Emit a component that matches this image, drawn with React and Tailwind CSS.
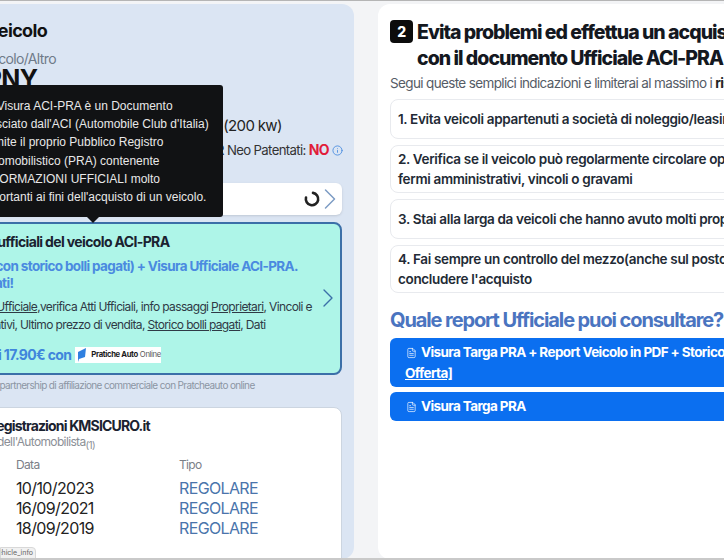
import { ChevronRight, Info, FileText } from 'lucide-react'

const STEPS = [
  ['1. Evita veicoli appartenuti a società di noleggio/leasing'],
  ['2. Verifica se il veicolo può regolarmente circolare oppure se ha', 'fermi amministrativi, vincoli o gravami'],
  ['3. Stai alla larga da veicoli che hanno avuto molti proprietari'],
  ["4. Fai sempre un controllo del mezzo(anche sul posto) prima di", "concludere l'acquisto"],
]

const REGS = ['10/10/2023', '16/09/2021', '18/09/2019']

function LeftPanel() {
  return (
    <div className="relative w-[414px] shrink-0 -ml-[60px] mt-[3px] rounded-xl bg-[#dbe5f3] pl-[17px] pr-[12px] pt-[17px]">
      <h2 className="text-[18px] leading-[20px] font-bold text-[#111] -ml-[5px]">Dati veicolo</h2>
      <div className="mt-[9px] text-[14px] leading-[18px] text-[#6f7a88] -ml-[4px]">Autoveicolo/Altro</div>
      <div className="text-[25px] leading-[30px] font-bold text-[#111] whitespace-nowrap -mt-[4px] -ml-[46px]">AB123PNY</div>

      <div className="mt-[22px] ml-[31px] text-[15px] leading-[20px] text-[#222] whitespace-nowrap">
        BMW Serie 3 Touring Business Plus (200 kw)
      </div>
      <div className="mt-[5px] -mr-[1px] flex items-center justify-end text-[13.2px] leading-[18px] text-[#333] whitespace-nowrap">
        <span>PER Neo Patentati:&nbsp;</span>
        <span className="text-[14px] font-bold text-[#e11d3a]">NO</span>
        <Info className="ml-[3px] w-[11px] h-[11px] text-[#4f8fe0]" />
      </div>

      <div className="mt-[24px] h-[32px] flex items-center justify-end rounded-md bg-white shadow-sm">
        <svg width="18" height="18" viewBox="0 0 18 18" fill="none">
          <path d="M10 2.9a6.2 6.2 0 1 1-7 4.6" stroke="#222" strokeWidth="2.6" strokeLinecap="round" />
        </svg>
        <ChevronRight className="w-[36px] h-[36px] -mr-[6px] -ml-[9px] text-[#7d9cc4]" strokeWidth={1} />
      </div>

      <div className="mt-[7px] h-[153px] relative rounded-lg border-2 border-[#3b6fa8] bg-[#aef5e8] pl-[14px] pr-[28px] pt-[9px]">
        <div className="text-[14px] leading-[18px] font-bold text-[#1a2230] whitespace-nowrap -ml-[3px]">Dati ufficiali del veicolo ACI-PRA</div>
        <div className="mt-[7px] -ml-[72px] text-[13.5px] leading-[17px] font-bold text-[#4a8ae0] whitespace-nowrap">
          <div>Report Veicolo (con storico bolli pagati) + Visura Ufficiale ACI-PRA.</div>
          <div className="ml-[13px]">Ottieni tutti i dati!</div>
        </div>
        <div className="mt-[6px] -ml-[36px] text-[12px] leading-[18px] text-[#2f3a46] whitespace-nowrap">
          <div>Visura <span className="underline">PRA Ufficiale</span>,verifica Atti Ufficiali, info passaggi <span className="underline">Proprietari</span>, Vincoli e</div>
          <div className="-ml-[25px]">Fermi Amministrativi, Ultimo prezzo di vendita, <span className="underline">Storico bolli pagati</span>, Dati</div>
        </div>
        <div className="mt-[12px] -ml-[68px] flex items-center text-[14px] leading-[18px] font-bold text-[#3f86dc] whitespace-nowrap">
          <span>A partire da soli 17.90€ con</span>
          <div className="ml-[4px] h-[16px] flex items-center bg-white tracking-tight">
            <svg width="14" height="16" viewBox="0 0 14 16">
              <path d="M3 5 L11 1 L10 10 L4 12 L3 15 Z" fill="#2f80e0" />
            </svg>
            <span className="ml-[2px] text-[7.7px] leading-none font-bold text-[#1a1a1a]">Pratiche Auto</span>
            <span className="ml-[2px] text-[7.7px] leading-none font-normal text-[#555]">Online</span>
          </div>
        </div>
        <ChevronRight className="absolute right-[-4px] top-[58px] w-[32px] h-[32px] text-[#3b6fa8]" strokeWidth={1} />
      </div>

      <div className="mt-[4px] -ml-[2px] text-[10px] leading-[13px] text-[#8b95a3] whitespace-nowrap">Servizio in partnership di affiliazione commerciale con Pratcheauto online</div>

      <div className="mt-[15px] h-[170px] rounded-t-lg border border-[#ccd5e0] bg-white pl-[14px] pt-[9px]">
        <div className="text-[14px] tracking-[-0.06em] leading-[18px] font-bold text-[#1a2230] whitespace-nowrap -ml-[22px]">Ultime registrazioni KMSICURO.it</div>
        <div className="text-[12px] leading-[14px] text-[#8b8f96] whitespace-nowrap -ml-[30px]">Certificato dell'Automobilista<sub className="text-[10px]">(1)</sub></div>
        <div className="mt-[8px] grid grid-cols-[163px_1fr] pl-[44px]">
          <div className="text-[12px] leading-[16px] text-[#7b8088]">Data</div>
          <div className="text-[12px] leading-[16px] text-[#7b8088]">Tipo</div>
        </div>
        <div className="mt-[5px]">
          {REGS.map((d) => (
            <div key={d} className="grid grid-cols-[163px_1fr] pl-[44px] text-[16px] leading-[20px]">
              <div className="text-[#222]">{d}</div>
              <div className="text-[#4a74ab]">REGOLARE</div>
            </div>
          ))}
        </div>
      </div>

      {/* tooltip sopra il pannello */}
      <div className="absolute left-[0px] top-[81px] w-[283px] h-[132px] rounded-[3px] bg-[#111214] pl-[40px] pt-[12px] font-['Liberation_Sans',sans-serif] text-[12px] tracking-normal leading-[18.2px] text-[#e8e8e8] whitespace-nowrap">
        <div>La Visura ACI-PRA è un Documento</div>
        <div>rilasciato dall'ACI (Automobile Club d'Italia)</div>
        <div>tramite il proprio Pubblico Registro</div>
        <div>Automobilistico (PRA) contenente</div>
        <div>INFORMAZIONI UFFICIALI molto</div>
        <div>importanti ai fini dell'acquisto di un veicolo.</div>
        <div className="absolute left-[147px] bottom-[-6px] w-0 h-0 border-x-[6px] border-x-transparent border-t-[6px] border-t-[#111214]" />
      </div>
    </div>
  )
}

function RightPanel() {
  return (
    <div className="w-[480px] shrink-0 ml-[24px] mt-[3px] rounded-xl bg-white pl-[12px] pt-[15px]">
      <div className="flex items-start gap-[4px]">
        <div className="mt-[1px] w-[23px] h-[23px] shrink-0 rounded-[4px] bg-[#0c0c0c] flex items-center justify-center text-[14px] font-extrabold text-white">2</div>
        <div className="text-[19.5px] tracking-[-0.05em] leading-[26px] font-extrabold text-[#14181f] whitespace-nowrap">
          Evita problemi ed effettua un acquisto sicuro
          <br />
          con il documento Ufficiale ACI-PRA
        </div>
      </div>
      <div className="mt-[3px] text-[13.5px] leading-[18px] text-[#555c66] whitespace-nowrap">
        Segui queste semplici indicazioni e limiterai al massimo i <b className="text-[#222]">rischi</b>
      </div>

      <div className="mt-[7px] flex flex-col gap-[6px]">
        {STEPS.map((lines, i) => (
          <div key={i} className={`rounded-lg border border-[#e8eaee] px-[7px] text-[13.5px] tracking-[-0.025em] leading-[20px] font-semibold text-[#222a35] whitespace-nowrap flex flex-col justify-center ${lines.length > 1 ? 'h-[48px]' : 'h-[40px]'}`}>
            {lines.map((l) => <div key={l}>{l}</div>)}
          </div>
        ))}
      </div>

      <h3 className="mt-[14px] text-[20px] tracking-[-0.055em] leading-[26px] font-bold text-[#4a74c0] whitespace-nowrap">Quale report Ufficiale puoi consultare?</h3>

      <div className="mt-[5px] flex flex-col gap-[5px] text-[13.5px] tracking-[-0.045em] font-bold text-white">
        <div className="h-[49px] rounded-md bg-[#0b6ff0] pl-[15px] pt-[4px] leading-[21px] whitespace-nowrap">
          <div className="flex items-center">
            <FileText className="ml-[1px] mr-[4px] w-[11px] h-[12px]" strokeWidth={1.5} />
            Visura Targa PRA + Report Veicolo in PDF + Storico Bolli [Super
          </div>
          <div className="underline">Offerta]</div>
        </div>
        <div className="h-[29px] rounded-md bg-[#0b6ff0] pl-[15px] flex items-center">
          <FileText className="ml-[1px] mr-[4px] w-[11px] h-[12px]" strokeWidth={1.5} />
          Visura Targa PRA
        </div>
      </div>
    </div>
  )
}

export default function App() {
  return (
    <div className="relative w-[724px] h-[560px] overflow-hidden bg-[#f3f4f6] border-t border-[#b5b5b5] font-['Inter',sans-serif] tracking-[-0.04em]">
      <div className="flex h-[558px] overflow-hidden">
        <LeftPanel />
        <RightPanel />
      </div>
      <div className="absolute left-0 bottom-[1px] h-[12px] w-[36px] rounded-tr-sm bg-[#f1f1f1] border border-[#d8d8d8] text-[7px] tracking-normal leading-[10px] text-[#666] overflow-hidden whitespace-nowrap flex justify-end pr-[2px]">vehicle_info</div>
      <div className="absolute left-0 right-0 bottom-0 h-[2px] bg-[#c9c9c9]" />
    </div>
  )
}
